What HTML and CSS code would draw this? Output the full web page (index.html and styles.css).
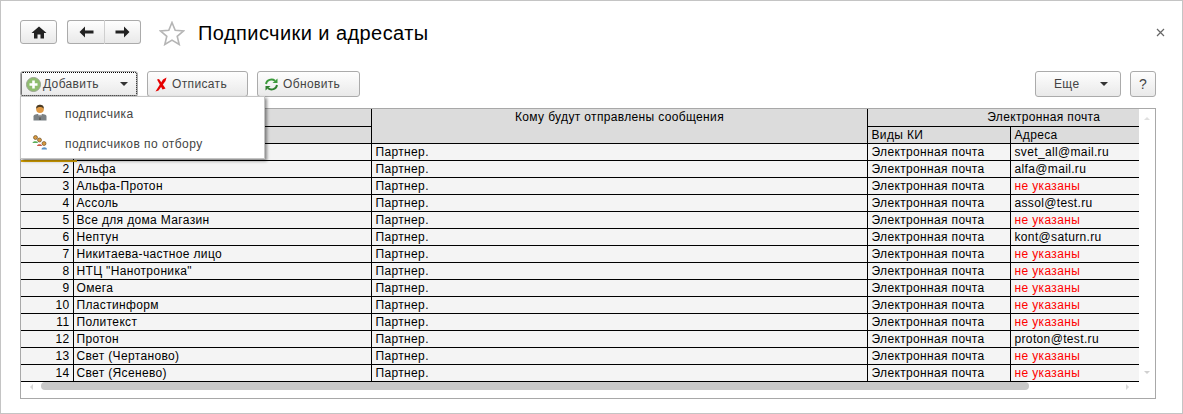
FILE: index.html
```html
<!DOCTYPE html>
<html lang="en">
<head>
    <meta charset="UTF-8">
    <title>Подписчики и адресаты</title>
    <link rel="stylesheet" href="styles.css">
</head>
<body>
    <div class="window">
        <div class="title-bar">
            <button class="btn nav-btn home-btn" aria-label="home">
                <svg width="16" height="13" viewBox="0 0 16 13"><path d="M8 0.5 L15.5 7 H13 V12.5 H9.5 V8.5 H6.5 V12.5 H3 V7 H0.5 Z" fill="#222"/></svg>
            </button>
            <div class="nav-group">
                <button class="btn nav-btn back-btn" aria-label="back">
                    <svg width="15" height="12" viewBox="0 0 15 12"><path d="M6 0.5 L0.5 6 L6 11.5 V7.5 H14.5 V4.5 H6 Z" fill="#222"/></svg>
                </button>
                <button class="btn nav-btn forward-btn" aria-label="forward">
                    <svg width="15" height="12" viewBox="0 0 15 12"><path d="M9 0.5 L14.5 6 L9 11.5 V7.5 H0.5 V4.5 H9 Z" fill="#222"/></svg>
                </button>
            </div>
            <svg class="star" width="26" height="25" viewBox="0 0 26 25"><path d="M13 1.5 L16.2 9.3 L24.6 9.9 L18.2 15.3 L20.2 23.5 L13 19.1 L5.8 23.5 L7.8 15.3 L1.4 9.9 L9.8 9.3 Z" fill="#fff" stroke="#b5b5b5" stroke-width="1.6"/></svg>
            <h1>Подписчики и адресаты</h1>
            <span class="close">
                <svg width="9" height="9" viewBox="0 0 9 9"><path d="M1 1 L8 8 M8 1 L1 8" stroke="#666" stroke-width="1.2"/></svg>
            </span>
        </div>

        <div class="toolbar">
            <button class="btn tool-btn add-btn">
                <svg width="15" height="15" viewBox="0 0 15 15"><circle cx="7.5" cy="7.5" r="7" fill="#8fbd6e" stroke="#9aa58f"/><path d="M7.5 3.5 V11.5 M3.5 7.5 H11.5" stroke="#fff" stroke-width="2.6"/></svg>
                <span>Добавить</span>
                <i class="caret"></i>
            </button>
            <button class="btn tool-btn remove-btn">
                <svg width="12" height="15" viewBox="0 0 12 15"><path d="M11.5 0.5 L8 2.5 L0.5 14.5 L3.5 13.5 L10.5 4 Z" fill="#e60000"/><path d="M2 2.5 L4 2 L10.5 11.5 L7.5 12.5 Z" fill="#e60000"/></svg>
                <span>Отписать</span>
            </button>
            <button class="btn tool-btn refresh-btn">
                <svg width="15" height="13" viewBox="0 0 15 13"><path d="M2 6 A5.5 5 0 0 1 11 2.8" stroke="#3b9a3b" stroke-width="1.9" fill="none"/><path d="M13 7 A5.5 5 0 0 1 4 10.2" stroke="#2f7f2f" stroke-width="1.9" fill="none"/><path d="M8.5 5 H13.5 V0.5 Z" fill="#3b9a3b"/><path d="M6.5 8 H1.5 V12.5 Z" fill="#2f7f2f"/></svg>
                <span>Обновить</span>
            </button>
            <div class="toolbar-right">
                <button class="btn tool-btn more-btn">
                    <span>Еще</span>
                    <i class="caret"></i>
                </button>
                <button class="btn tool-btn help-btn">?</button>
            </div>
        </div>

        <div class="grid-area">
            <div class="current-mark"></div>
            <div class="add-menu">
                <div class="menu-item">
                    <svg width="15" height="17" viewBox="0 0 15 17"><path d="M1 16.5 V12.5 C1 10.5 4 10 7.5 10 C11 10 14 10.5 14 12.5 V16.5 Z" fill="#7b8185"/><path d="M5.5 10 H9.5 L7.5 14 Z" fill="#eee"/><path d="M7 11 H8 L8.3 16 H6.7 Z" fill="#555"/><circle cx="7.5" cy="5.2" r="3.8" fill="#e09a45"/><path d="M3.7 5 C3.5 1.5 5.5 0.8 7.5 0.8 C9.5 0.8 11.5 1.5 11.3 5 C10.5 3.5 9 3 7.5 3 C6 3 4.5 3.5 3.7 5 Z" fill="#4a3a22"/></svg>
                    <span>подписчика</span>
                </div>
                <div class="menu-item">
                    <svg width="16" height="15" viewBox="0 0 16 15"><circle cx="3.5" cy="2.5" r="2" fill="#d9983f" stroke="#5a4420" stroke-width=".6"/><path d="M0.5 8 C0.5 5.5 6 5.5 6 8 Z" fill="#5cb05c"/><circle cx="7.5" cy="5" r="2" fill="#d9983f" stroke="#5a4420" stroke-width=".6"/><path d="M5 11 C5 8.5 10 8.5 10 11 Z" fill="#c9584a"/><circle cx="12" cy="8.5" r="2" fill="#d9983f" stroke="#5a4420" stroke-width=".6"/><path d="M9.5 14.5 C9.5 11.5 15 11.5 15 14.5 Z" fill="#5a92c8"/></svg>
                    <span>подписчиков по отбору</span>
                </div>
            </div>

            <div class="grid-scroll">
                <table class="grid">
                    <colgroup>
                        <col class="col-num"><col class="col-name"><col class="col-who"><col class="col-kind"><col class="col-addr">
                    </colgroup>
                    <thead>
                        <tr>
                            <th colspan="2"></th>
                            <th rowspan="2" class="top">Кому будут отправлены сообщения</th>
                            <th colspan="2" class="group">Электронная почта</th>
                        </tr>
                        <tr>
                            <th colspan="2"></th>
                            <th class="left">Виды КИ</th>
                            <th class="left">Адреса</th>
                        </tr>
                    </thead>
                    <tbody>
                        <tr><td class="num"></td><td class="name"></td><td>Партнер.</td><td>Электронная почта</td><td>svet_all@mail.ru</td></tr>
                        <tr><td class="num">2</td><td class="name">Альфа</td><td>Партнер.</td><td>Электронная почта</td><td>alfa@mail.ru</td></tr>
                        <tr><td class="num">3</td><td class="name">Альфа-Протон</td><td>Партнер.</td><td>Электронная почта</td><td class="missing">не указаны</td></tr>
                        <tr><td class="num">4</td><td class="name">Ассоль</td><td>Партнер.</td><td>Электронная почта</td><td>assol@test.ru</td></tr>
                        <tr><td class="num">5</td><td class="name">Все для дома Магазин</td><td>Партнер.</td><td>Электронная почта</td><td class="missing">не указаны</td></tr>
                        <tr><td class="num">6</td><td class="name">Нептун</td><td>Партнер.</td><td>Электронная почта</td><td>kont@saturn.ru</td></tr>
                        <tr><td class="num">7</td><td class="name">Никитаева-частное лицо</td><td>Партнер.</td><td>Электронная почта</td><td class="missing">не указаны</td></tr>
                        <tr><td class="num">8</td><td class="name">НТЦ "Нанотроника"</td><td>Партнер.</td><td>Электронная почта</td><td class="missing">не указаны</td></tr>
                        <tr><td class="num">9</td><td class="name">Омега</td><td>Партнер.</td><td>Электронная почта</td><td class="missing">не указаны</td></tr>
                        <tr><td class="num">10</td><td class="name">Пластинформ</td><td>Партнер.</td><td>Электронная почта</td><td class="missing">не указаны</td></tr>
                        <tr><td class="num">11</td><td class="name">Политекст</td><td>Партнер.</td><td>Электронная почта</td><td class="missing">не указаны</td></tr>
                        <tr><td class="num">12</td><td class="name">Протон</td><td>Партнер.</td><td>Электронная почта</td><td>proton@test.ru</td></tr>
                        <tr><td class="num">13</td><td class="name">Свет (Чертаново)</td><td>Партнер.</td><td>Электронная почта</td><td class="missing">не указаны</td></tr>
                        <tr><td class="num">14</td><td class="name">Свет (Ясенево)</td><td>Партнер.</td><td>Электронная почта</td><td class="missing">не указаны</td></tr>
                    </tbody>
                </table>
                <div class="v-scroll">
                    <i class="arrow-up"></i>
                    <i class="arrow-down"></i>
                </div>
            </div>
            <div class="h-scroll">
                <i class="arrow-left"></i>
                <div class="h-thumb"></div>
                <i class="arrow-right"></i>
            </div>
        </div>
    </div>
</body>
</html>
```

FILE: styles.css
```css
html, body {
    margin: 0;
    padding: 0;
    background-color: #fff;
}

body {
    font-family: "Liberation Sans", Arial, sans-serif;
    font-size: 12px;
    color: #000;
}

.window {
    box-sizing: border-box;
    width: 1183px;
    height: 414px;
    border: 1px solid #c4c4c4;
    padding: 19px 26px 0 19px;
}

.title-bar {
    display: flex;
    align-items: flex-start;
    height: 26px;
    margin-bottom: 25px;
}

.btn {
    box-sizing: border-box;
    border: 1px solid #ababab;
    border-radius: 3px;
    background: linear-gradient(#fefefe, #e9e9e9);
    font-family: inherit;
    color: #333;
    padding: 0;
    display: flex;
    align-items: center;
}

.nav-btn {
    height: 24px;
    justify-content: center;
}

.home-btn {
    width: 37px;
    margin-right: 10px;
}

.nav-group {
    display: flex;
}

.back-btn {
    width: 38px;
    border-radius: 3px 0 0 3px;
    border-right: 1px solid #cfcfcf;
}

.forward-btn {
    width: 36px;
    border-radius: 0 3px 3px 0;
    border-left: none;
}

.star {
    margin-left: 18px;
    margin-right: 13px;
    margin-top: 1px;
}

h1 {
    font-size: 20px;
    letter-spacing: 0.43px;
    line-height: 27px;
    font-weight: normal;
    margin: 0;
    flex: 1;
    color: #000;
}

.close {
    display: flex;
    margin-right: -9px;
    margin-top: 8px;
}

.toolbar {
    display: flex;
    align-items: center;
    height: 26px;
    gap: 9px;
    margin-bottom: 11px;
}

.tool-btn {
    height: 26px;
    font-size: 12px;
    letter-spacing: 0.35px;
    color: #444;
}

.add-btn {
    width: 118px;
    padding-left: 5px;
    outline: 1px dotted #000;
    outline-offset: -2px;
}

.add-btn span {
    margin-left: 2px;
}

.add-btn .caret {
    margin-left: 21px;
}

.remove-btn {
    width: 101px;
    padding-left: 7px;
    gap: 5px;
}

.refresh-btn {
    width: 103px;
    padding-left: 6px;
    gap: 4px;
}

.toolbar-right {
    margin-left: auto;
    display: flex;
    gap: 9px;
}

.more-btn {
    width: 86px;
    padding-left: 18px;
}

.more-btn .caret {
    margin-left: 21px;
}

.help-btn {
    width: 26px;
    justify-content: center;
    font-size: 14px;
}

.caret {
    width: 0;
    height: 0;
    border-left: 4px solid transparent;
    border-right: 4px solid transparent;
    border-top: 4px solid #333;
}

/* grid */
.grid-area {
    position: relative;
    box-sizing: border-box;
    width: 1136px;
    height: 291px;
    border: 1px solid #a8a8a8;
}

.grid-scroll {
    display: flex;
    height: 265px;
}

.grid {
    table-layout: fixed;
    width: 1118px;
    border-collapse: collapse;
    font-size: 12px;
    letter-spacing: 0.35px;
}

.col-num { width: 52px; }
.col-name { width: 298px; }
.col-who { width: 496px; }
.col-kind { width: 143px; }
.col-addr { width: 129px; }

.grid th, .grid td {
    box-sizing: border-box;
    height: 17px;
    padding: 0 3px 0 4px;
    border: 1px solid #000;
    white-space: nowrap;
    overflow: hidden;
    line-height: 16px;
}

.grid tr > :first-child {
    border-left: none;
}

.grid tr > :last-child {
    border-right: none;
}

.grid thead tr:first-child th {
    border-top: none;
}

.grid th {
    background-color: #dcdcdc;
    font-weight: normal;
    text-align: center;
}

.grid th.left {
    text-align: left;
}

.grid th.top {
    vertical-align: top;
}

.grid th.group {
    padding-left: 84px;
}

.grid td {
    background-color: #f4f4f4;
}

.grid td.num {
    text-align: right;
}

.grid td.name {
    padding-left: 3px;
}

.grid td.missing {
    color: #ff0000;
}

.current-mark {
    position: absolute;
    left: 0;
    top: 51px;
    width: 56px;
    height: 2px;
    background-color: #e0a800;
}

.v-scroll {
    flex: 1;
    display: flex;
    flex-direction: column;
    justify-content: space-between;
    align-items: center;
    padding: 8px 0 0;
    height: 257px;
}

.h-scroll {
    display: flex;
    align-items: center;
    height: 25px;
    padding-left: 9px;
}

.h-thumb {
    width: 988px;
    height: 8px;
    margin-left: 8px;
    margin-top: -1px;
    border-radius: 4px;
    background-color: #c9c9c9;
}

.arrow-left, .arrow-right, .arrow-up, .arrow-down {
    width: 0;
    height: 0;
    display: block;
}

.arrow-left {
    border-top: 3px solid transparent;
    border-bottom: 3px solid transparent;
    border-right: 3px solid #d8d8d8;
}

.arrow-right {
    margin-left: 97px;
    border-top: 3px solid transparent;
    border-bottom: 3px solid transparent;
    border-left: 3px solid #d8d8d8;
}

.arrow-up {
    border-left: 3px solid transparent;
    border-right: 3px solid transparent;
    border-bottom: 3px solid #e0e0e0;
}

.arrow-down {
    border-left: 3px solid transparent;
    border-right: 3px solid transparent;
    border-top: 3px solid #d0d0d0;
}

/* dropdown */
.add-menu {
    position: absolute;
    left: -1px;
    top: -13px;
    z-index: 10;
    box-sizing: border-box;
    width: 245px;
    height: 63px;
    padding-top: 2px;
    background-color: #fff;
    border: 1px solid #c4c4c4;
    box-shadow: 2px 2px 3px rgba(0, 0, 0, 0.45);
}

.menu-item {
    display: flex;
    align-items: center;
    height: 30px;
    color: #444;
    padding-left: 11px;
}

.menu-item svg {
    width: 16px;
    margin-right: 17px;
    margin-top: -3px;
}

.menu-item span {
    letter-spacing: 0.45px;
}
```
